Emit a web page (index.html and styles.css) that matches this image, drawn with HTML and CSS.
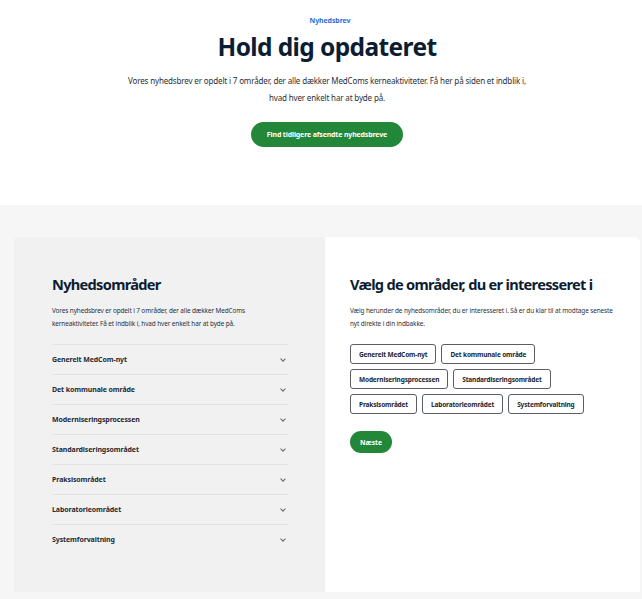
FILE: index.html
```html
<!DOCTYPE html>
<html lang="da">
<head>
<meta charset="utf-8">
<title>Nyhedsbrev</title>
<link rel="stylesheet" href="styles.css">
</head>
<body>
<header class="hero">
  <div class="eyebrow">Nyhedsbrev</div>
  <h1 class="hero-title">Hold dig opdateret</h1>
  <p class="hero-text">Vores nyhedsbrev er opdelt i 7 områder, der alle dækker MedComs kerneaktiviteter. Få her på siden et indblik i,<br>hvad hver enkelt har at byde på.</p>
  <a class="btn btn-hero" href="#">Find tidligere afsendte nyhedsbreve</a>
</header>
<section class="areas">
  <div class="card card-left">
    <h2 class="card-title">Nyhedsområder</h2>
    <p class="card-text">Vores nyhedsbrev er opdelt i 7 områder, der alle dækker MedComs<br>kerneaktiviteter. Få et indblik i, hvad hver enkelt har at byde på.</p>
    <ul class="accordion">
      <li class="acc-row"><span>Generelt MedCom-nyt</span><span class="chev"></span></li>
      <li class="acc-row"><span>Det kommunale område</span><span class="chev"></span></li>
      <li class="acc-row"><span>Moderniseringsprocessen</span><span class="chev"></span></li>
      <li class="acc-row"><span>Standardiseringsområdet</span><span class="chev"></span></li>
      <li class="acc-row"><span>Praksisområdet</span><span class="chev"></span></li>
      <li class="acc-row"><span>Laboratorieområdet</span><span class="chev"></span></li>
      <li class="acc-row"><span>Systemforvaltning</span><span class="chev"></span></li>
    </ul>
  </div>
  <div class="card card-right">
    <h2 class="card-title nowrap">Vælg de områder, du er interesseret i</h2>
    <p class="card-text">Vælg herunder de nyhedsområder, du er interesseret i. Så er du klar til at modtage seneste<br>nyt direkte i din indbakke.</p>
    <div class="tags">
      <span class="tag">Generelt MedCom-nyt</span>
      <span class="tag">Det kommunale område</span>
      <span class="tag">Moderniseringsprocessen</span>
      <span class="tag">Standardiseringsområdet</span>
      <span class="tag">Praksisområdet</span>
      <span class="tag">Laboratorieområdet</span>
      <span class="tag">Systemforvaltning</span>
    </div>
    <a class="btn btn-next" href="#">Næste</a>
  </div>
</section>
</body>
</html>
```

FILE: styles.css
```css
* { box-sizing: border-box; }
html, body { margin: 0; padding: 0; }
body {
  font-family: "Noto Sans", "DejaVu Sans", sans-serif;
  color: #1d2430;
  background: #f6f6f6;
  width: 642px;
  height: 599px;
  overflow: hidden;
}
.hero {
  background: #fff;
  height: 205px;
  display: flex;
  flex-direction: column;
  align-items: center;
  padding: 16px 0 0 12px;
}
.eyebrow {
  font-size: 7px;
  font-weight: 700;
  color: #2a6fd6;
  line-height: 9px;
  letter-spacing: -0.1px;
  margin-left: 6px;
}
.hero-title {
  margin: 6px 0 0;
  font-size: 24.5px;
  line-height: 32px;
  font-weight: 700;
  color: #0c1d33;
  letter-spacing: -0.6px;
}
.hero-text {
  margin: 9px 0 0;
  text-align: center;
  font-size: 8px;
  line-height: 17px;
  color: #2a2f38;
  letter-spacing: -0.15px;
}
.btn {
  display: inline-flex;
  align-items: center;
  justify-content: center;
  background: #23873a;
  color: #fff;
  text-decoration: none;
  font-weight: 700;
  border-radius: 999px;
}
.btn-hero {
  margin-top: 16px;
  width: 152px;
  height: 25px;
  font-size: 7px;
  letter-spacing: -0.15px;
}
.areas {
  display: flex;
  padding: 32px 2px 0 14px;
}
.card {
  height: 355px;
}
.card-left {
  width: 311px;
  background: #f1f1f1;
  padding: 36px 37px 0 38px;
  border-radius: 4px 0 0 0;
}
.card-right {
  width: 315px;
  background: #fff;
  padding: 36px 10px 0 25px;
  border-radius: 0 6px 0 0;
}
.card-title {
  margin: 0;
  font-size: 14.6px;
  line-height: 22px;
  font-weight: 700;
  color: #0c1d33;
  letter-spacing: -0.7px;
}
.nowrap { white-space: nowrap; }
.card-text {
  margin: 9px 0 0;
  font-size: 6.4px;
  line-height: 13px;
  color: #2a2f38;
  letter-spacing: -0.1px;
}
.accordion {
  list-style: none;
  margin: 14px 0 0;
  padding: 0;
}
.acc-row {
  height: 30px;
  border-top: 1px solid #e2e2e2;
  display: flex;
  align-items: center;
  justify-content: space-between;
  font-size: 7px;
  font-weight: 700;
  color: #262a31;
  padding-right: 3px;
  letter-spacing: -0.1px;
}
.chev {
  width: 4px;
  height: 4px;
  border-right: 1px solid #666;
  border-bottom: 1px solid #666;
  transform: rotate(45deg);
  margin-top: -2px;
}
.tags {
  margin-top: 14px;
  display: flex;
  flex-wrap: wrap;
  gap: 5px;
  width: 240px;
}
.tag {
  height: 20px;
  display: inline-flex;
  align-items: center;
  padding: 0 8px;
  border: 1px solid #5a5f66;
  border-radius: 3px;
  font-size: 6.5px;
  font-weight: 700;
  color: #1d2430;
  letter-spacing: -0.15px;
  background: #fff;
}
.btn-next {
  margin-top: 17px;
  width: 42px;
  height: 22px;
  font-size: 6.8px;
}
```
